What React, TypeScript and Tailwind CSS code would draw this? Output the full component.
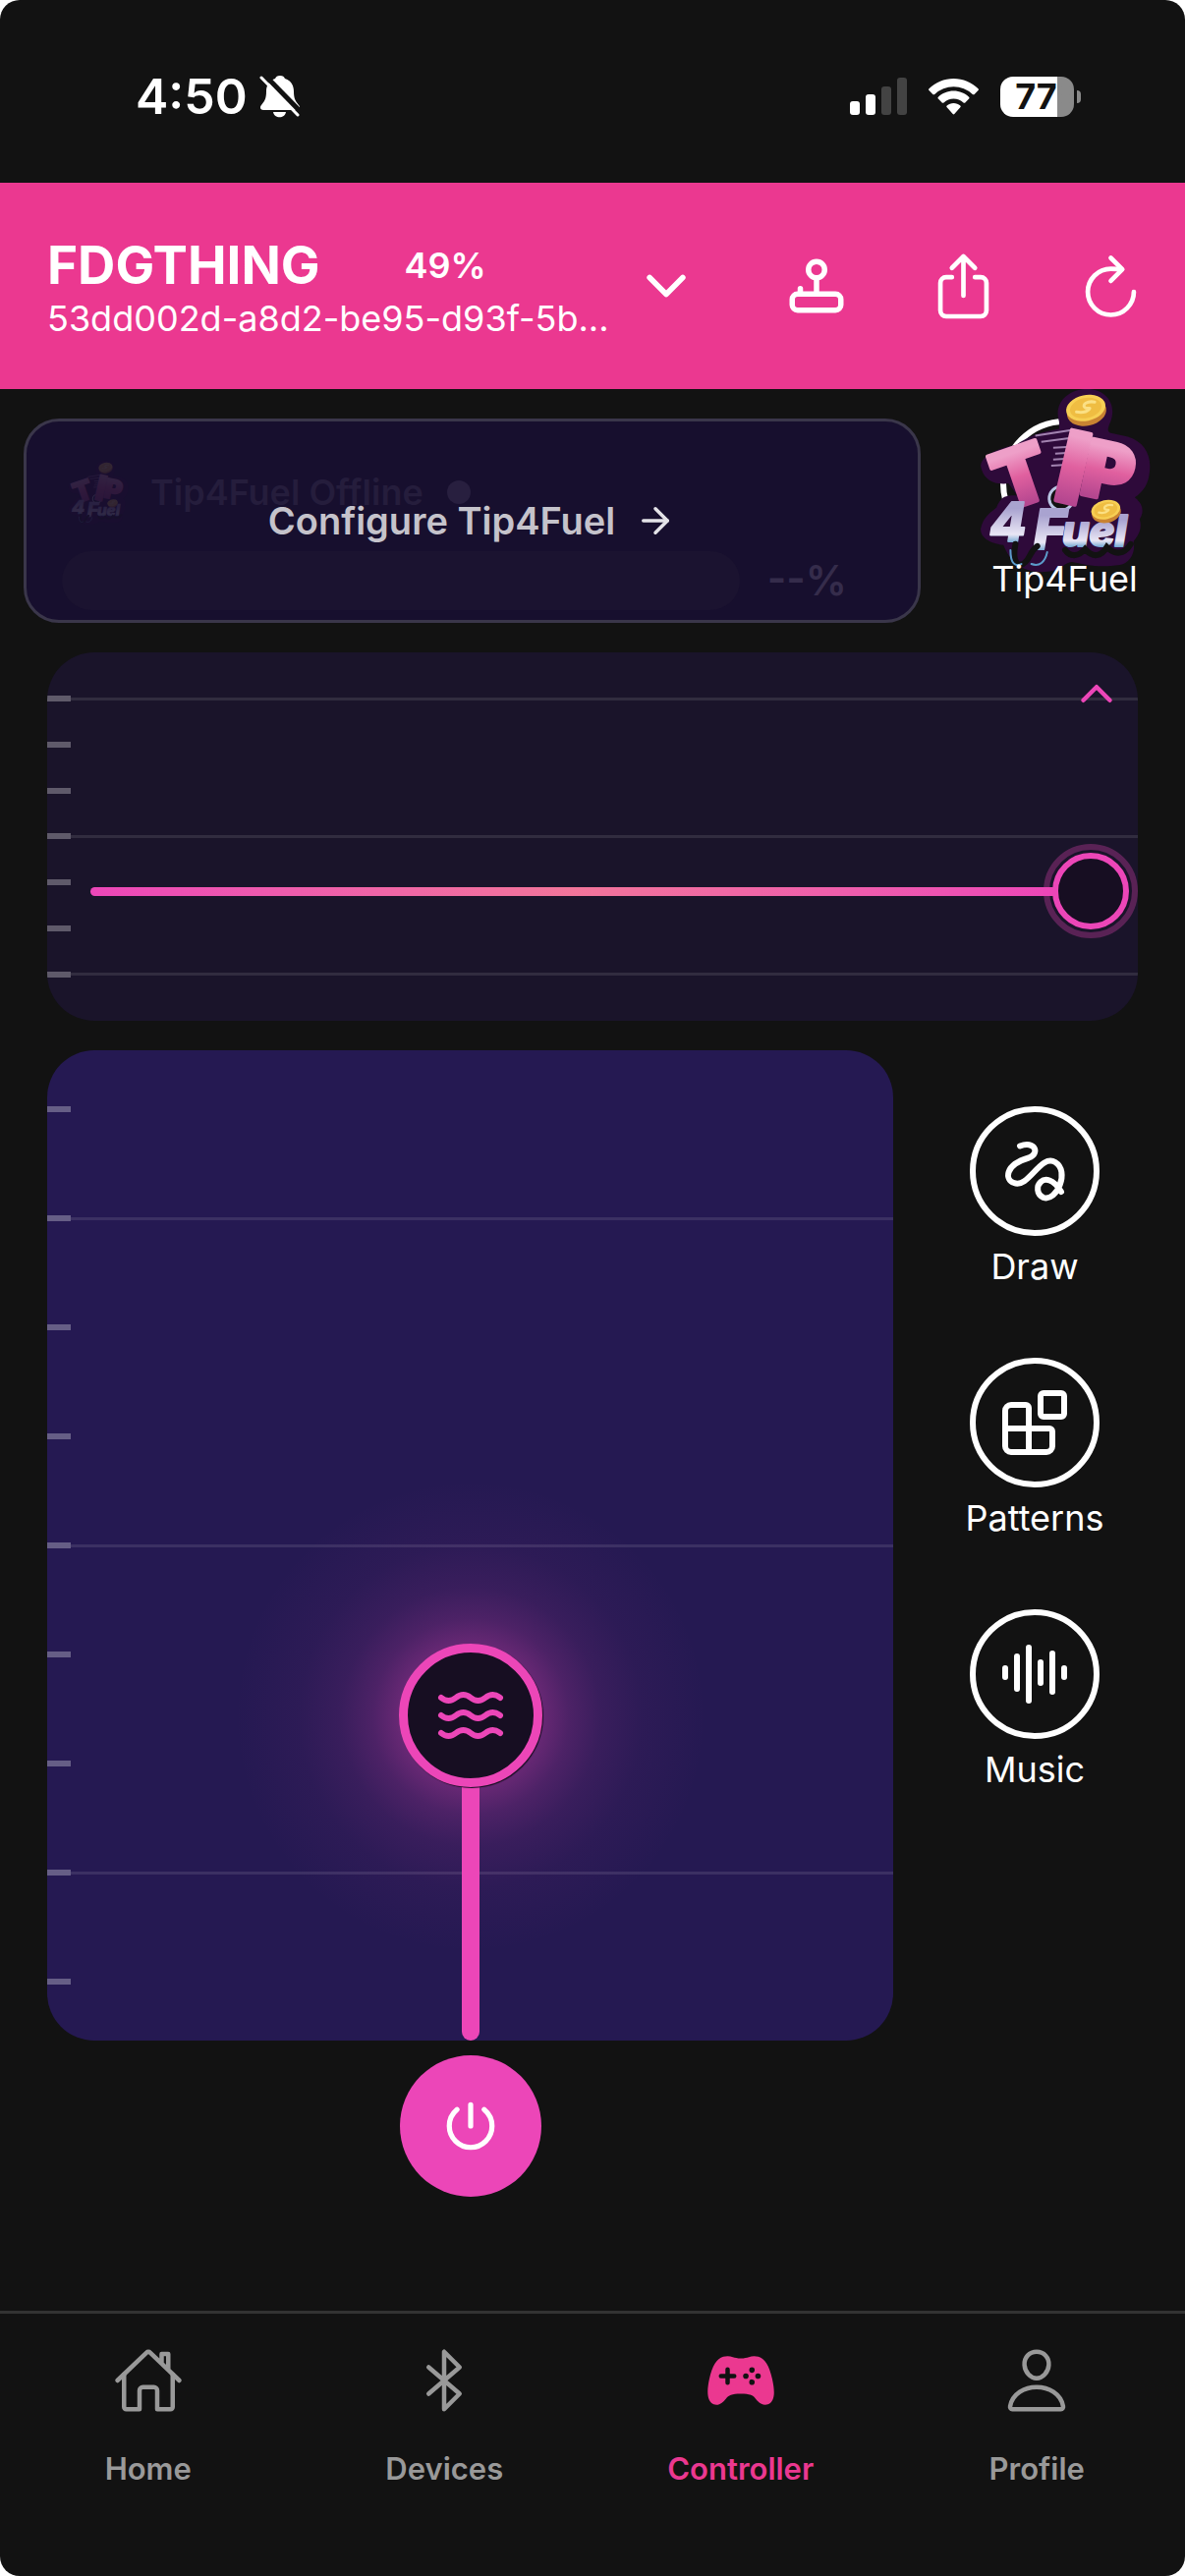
import { ArrowRight, AudioLines, Blocks, Joystick, LineSquiggle, Waves } from "lucide-react";
import {
  IoBluetoothOutline,
  IoChevronDown,
  IoChevronUp,
  IoGameController,
  IoHomeOutline,
  IoPersonOutline,
  IoPowerOutline,
  IoRefresh,
  IoShareOutline,
} from "react-icons/io5";

const speedTicks = [true, false, false, true, false, false, true];
const rangeTicks = [false, true, false, false, true, false, false, true, false];

const modes = [
  { label: "Draw", icon: LineSquiggle },
  { label: "Patterns", icon: Blocks },
  { label: "Music", icon: AudioLines },
];

const tabs = [
  { label: "Home", icon: IoHomeOutline, active: false },
  { label: "Devices", icon: IoBluetoothOutline, active: false },
  { label: "Controller", icon: IoGameController, active: true },
  { label: "Profile", icon: IoPersonOutline, active: false },
];

function Coin({ x, y, size }: { x: number; y: number; size: number }) {
  return (
    <g transform={`translate(${x} ${y}) rotate(-12) scale(${size})`}>
      <ellipse cx="0" cy="3" rx="20" ry="14" fill="#c98332" />
      <ellipse cx="0" cy="-1" rx="20" ry="13" fill="#f7cf54" />
      <ellipse cx="0" cy="-1" rx="16" ry="10" fill="#efbd42" />
      <path d="M10-5C3-8-3-5-1-2s7 1 4 3-8 2-13 0" fill="none" stroke="#fbe084" strokeWidth="3" strokeLinecap="round" />
    </g>
  );
}

function TipLogo({ id, className }: { id: string; className: string }) {
  const pink = `url(#${id}-pink)`;
  const steel = `url(#${id}-steel)`;
  return (
    <svg viewBox="0 0 172 186" className={className} aria-hidden="true">
      <defs>
        <linearGradient id={`${id}-pink`} x1="0" y1="0" x2="0" y2="1">
          <stop offset="0.25" stopColor="#ee9fc8" />
          <stop offset="0.5" stopColor="#e0609f" />
          <stop offset="0.8" stopColor="#b4468f" />
        </linearGradient>
        <linearGradient id={`${id}-steel`} x1="0" y1="0" x2="0" y2="1">
          <stop offset="0.3" stopColor="#a9a3d0" />
          <stop offset="0.7" stopColor="#e9e6f5" />
          <stop offset="0.85" stopColor="#5c9ccb" />
        </linearGradient>
      </defs>
      {/* dark sticker outline */}
      <path
        d="M80 35C74 16 89 2 108 2c19 0 30 15 24 32-3 7-4 10-1 12l18 4c17 5 24 19 22 35-1 12-6 20-15 26 8 6 10 14 5 22 3 10-2 17-6 22 2 12-4 22-14 24-21 3-34 0-48-3-10 1-10 10-31 10-20 0-32-11-38-27C9 157 1 151 1 143c2-12 10-17 16-22 5-13 12-12 21-12l-9-12C12 99 3 91 1 79c1-11 19-18 36-21 13-9 22-12 43-16z"
        fill="#2e0a3a"
      />
      <path d="M56 49l38-6M62 55l32-4M74 61l18-1M76 67l16-1M74 73l16-1M72 79l16-1" stroke="#a283b0" strokeWidth="2" />
      <circle cx="82" cy="112" r="12" fill="#121212" stroke="#b9c5e3" strokeWidth="3" />
      <g fontFamily="Inter, Roboto, sans-serif" fontWeight="900">
        <g fill={pink} stroke={pink} strokeWidth="4" strokeLinejoin="round">
          <text x="14" y="118" fontSize="80" transform="rotate(-19 42 90)">T</text>
          <text x="80" y="117" fontSize="100" transform="rotate(13 94 80)">I</text>
          <text x="104" y="113" fontSize="78" transform="rotate(12 130 85)">P</text>
        </g>
        <g fill={steel} stroke={steel} strokeWidth="2" strokeLinejoin="round" fontStyle="italic" fontWeight="800">
          <text x="10" y="155" fontSize="54">4</text>
          <text x="54" y="163" fontSize="56">F</text>
          <text x="83" y="160" fontSize="43">uel</text>
        </g>
      </g>
      <path d="M36 158c-4 20 4 24 10 18 5-4 4-10 12-16M86 164c6 8 14 6 20-1 8 9 16 8 22-2 8 8 17 8 24-3" fill="none" stroke="#121212" strokeWidth="6" strokeLinecap="round" />
      <path d="M31 164c0 14 5 17 11 14M52 178c8 3 14-2 16-12" fill="none" stroke="#5c9ccb" strokeWidth="2" strokeLinecap="round" />
      <Coin x={107} y={22} size={1} />
      <Coin x={127} y={124} size={0.74} />
    </svg>
  );
}

function StatusBar() {
  return (
    <div className="flex h-[186px] items-start justify-between pt-[70px] pr-[106px] pl-[138px] text-white">
      <div className="flex h-14 items-center gap-3">
        <span className="text-[50px] leading-none font-semibold">4:50</span>
        <svg viewBox="0 0 42 44" className="h-11 w-[42px]" fill="#fff" aria-label="Silent mode">
          <path d="M21 1c-3 0-4 1-5 3-7 2-9 8-9 13 0 8-2 10-5 14-2 2-1 5 2 5h34c3 0 4-3 2-5-3-4-5-6-5-14 0-5-2-11-9-13-1-2-2-3-5-3z" />
          <path d="M14 38h13c-1 7-12 7-13 0z" />
          <path d="M4-1l40 41" stroke="#121212" strokeWidth="5" />
          <path d="M2 3l37 38" stroke="#fff" strokeWidth="3" strokeLinecap="round" />
        </svg>
      </div>
      <div className="flex h-14 items-center gap-[22px]">
        <svg viewBox="0 0 58 38" className="h-[38px] w-[58px]" aria-label="Signal">
          <rect x="0" y="24" width="10" height="14" rx="3" fill="#fff" />
          <rect x="16" y="17" width="10" height="21" rx="3" fill="#fff" />
          <rect x="32" y="9" width="10" height="29" rx="3" fill="#434343" />
          <rect x="48" y="0" width="10" height="38" rx="3" fill="#434343" />
        </svg>
        <svg viewBox="0 0 51 37" className="h-[37px] w-[51px]" fill="#fff" aria-label="Wi-Fi">
          <path d="M25.500 0C35 0 44 4 50.500 10.200c.6.6.6 1.300 0 1.900l-3.800 3.800c-.6.6-1.300.6-1.900 0a28 28 0 0 0-38.600 0c-.6.6-1.300.6-1.900 0L.5 12.100c-.6-.6-.6-1.300 0-1.900C7 4 16 0 25.500 0z" />
          <path d="M25.500 12.500c6 0 11.500 2.300 15.600 6.200.6.6.6 1.300 0 1.900l-3.800 3.800c-.5.5-1.200.5-1.800 0a15 15 0 0 0-20 0c-.6.5-1.300.5-1.800 0l-3.800-3.800c-.6-.6-.6-1.300 0-1.900 4.100-3.900 9.600-6.200 15.600-6.200z" />
          <path d="M25.500 25c2.600 0 5 .9 6.800 2.500.6.5.6 1.200 0 1.800l-6 6.800c-.5.6-1.100.6-1.600 0l-6-6.800c-.6-.6-.6-1.300 0-1.800 1.800-1.600 4.200-2.500 6.800-2.500z" />
        </svg>
        <div className="flex items-center gap-[3px]">
          <div className="flex h-[41px] w-[75px] items-center rounded-[13px] bg-linear-to-r from-white from-77% to-[#8a8a8a] to-77%">
            <span className="w-[73px] text-center text-[36px] leading-none font-bold text-[#121212]">77</span>
          </div>
          <div className="h-[13px] w-1 rounded-r-full bg-[#8a8a8a]" />
        </div>
      </div>
    </div>
  );
}

function DeviceHeader() {
  return (
    <header className="flex h-[210px] items-center bg-[#eb3890] pr-[38px] pl-12 text-white">
      <div className="min-w-0 flex-1 pt-[6px]">
        <div className="flex items-center gap-[86px]">
          <h1 className="text-[53px] leading-[60px] font-bold">FDGTHING</h1>
          <span className="text-[36px] leading-[60px] font-semibold">49%</span>
        </div>
        <p className="text-[36px] leading-[48px]">53dd002d-a8d2-be95-d93f-5b...</p>
      </div>
      <div className="flex items-center">
        <button type="button" aria-label="Choose device" className="mr-[90px]">
          <IoChevronDown size={60} />
        </button>
        <button type="button" aria-label="Joystick" className="mr-[79px]">
          <Joystick size={66} />
        </button>
        <button type="button" aria-label="Share" className="mr-[75px]">
          <IoShareOutline size={75} />
        </button>
        <button type="button" aria-label="Refresh">
          <IoRefresh size={75} />
        </button>
      </div>
    </header>
  );
}

function TipPanel() {
  return (
    <section className="flex pt-[30px] pl-6">
      <div className="relative h-[208px] flex-1 rounded-[36px] border-[3px] border-[#3a364a] bg-[#170f2e] pt-9 pl-9">
        <div className="flex h-[72px] items-center">
          <TipLogo id="small" className="ml-1 h-[66px] w-[66px] opacity-12" />
          <span className="ml-5 text-[36px] leading-none font-semibold text-[#251d3c]">Tip4Fuel Offline</span>
          <span className="ml-6 size-6 rounded-full bg-[#281f3f]" />
        </div>
        <div className="mt-6 flex h-[60px] items-center pr-[72px]">
          <div className="h-full flex-1 rounded-[30px] bg-[#1b1330]" />
          <span className="ml-7 text-[42px] leading-none font-semibold text-[#352c4b]">--%</span>
        </div>
        <button
          type="button"
          className="absolute inset-0 flex items-center justify-center gap-5 text-[38px] font-semibold text-[#c5c3cb]"
        >
          Configure Tip4Fuel
          <ArrowRight size={42} className="text-[#e4e3e8]" />
        </button>
      </div>
      <button type="button" className="relative ml-6 flex w-[245px] flex-col items-center text-white">
        <span className="size-[132px] rounded-full border-[6px] border-white" />
        <TipLogo id="large" className="absolute -top-8 left-9 w-[174px] overflow-visible" />
        <span className="relative mt-[10px] text-[36px] leading-[42px]">Tip4Fuel</span>
      </button>
    </section>
  );
}

function Ticks({ pattern }: { pattern: boolean[] }) {
  return (
    <>
      {pattern.map((full, i) => (
        <div key={i} className="flex h-[6px] items-center">
          <div className="h-full w-6 bg-white/30" />
          {full && <div className="h-[3px] flex-1 bg-white/10" />}
        </div>
      ))}
    </>
  );
}

function SpeedPanel() {
  return (
    <section className="relative mx-12 mt-[30px] flex h-[375px] flex-col justify-between overflow-hidden rounded-[48px] bg-[#1a142a] py-11">
      <Ticks pattern={speedTicks} />
      <button type="button" aria-label="Collapse" className="absolute top-[18px] right-[18px] text-[#ec46b8]">
        <IoChevronUp size={48} />
      </button>
      <div className="absolute inset-x-0 top-[195px] flex h-24 items-center pl-11">
        <div className="-mr-[10px] h-[9px] flex-1 rounded-l-full bg-linear-to-r from-[#ec46b8] via-[#f2759a] to-[#ec46b8]" />
        <div className="relative size-24 rounded-full border-[6px] border-[#ec46b8]/30 p-[3px]">
          <div className="size-full rounded-full border-[6px] border-[#ec46b8] bg-[#170e22]" />
        </div>
      </div>
    </section>
  );
}

function IntensityPanel() {
  return (
    <div className="flex min-w-0 flex-1 flex-col items-center">
      <div className="relative flex h-[1008px] w-full flex-col justify-between overflow-hidden rounded-[48px] bg-[#251952] py-[57px]">
        <Ticks pattern={rangeTicks} />
        <div className="absolute inset-x-0 bottom-0 flex h-[640px] flex-col items-center">
          <div className="absolute top-0 size-[620px] rounded-full bg-[radial-gradient(circle,#ec46b859_70px,#ec46b833_100px,#ec46b81a_132px,#ec46b80a_175px,#ec46b800_240px)]" />
          <div className="relative mt-[236px] flex size-[146px] shrink-0 items-center justify-center rounded-full border-[9px] border-[#ec46b8] bg-[#170e22] text-[#ec46b8] shadow-[1px_1px_1px_#170e22]">
            <Waves size={72} />
          </div>
          <div className="w-[18px] flex-1 rounded-b-full bg-[#ec46b8]" />
        </div>
      </div>
      <button
        type="button"
        aria-label="Power"
        className="mt-[15px] flex size-36 items-center justify-center rounded-full bg-[#ec46b8] text-white"
      >
        <IoPowerOutline size={58} className="[&_path]:stroke-[46px]" />
      </button>
    </div>
  );
}

function ModeList() {
  return (
    <div className="flex w-[297px] flex-col items-center gap-[72px] pt-[57px] pr-[9px]">
      {modes.map(({ label, icon: Icon }) => (
        <button key={label} type="button" className="flex flex-col items-center gap-[10px] text-white">
          <span className="flex size-[132px] items-center justify-center rounded-full border-[6px] border-white">
            <Icon size={72} />
          </span>
          <span className="text-[36px] leading-[42px]">{label}</span>
        </button>
      ))}
    </div>
  );
}

function TabBar() {
  return (
    <nav className="flex h-[270px] border-t-[3px] border-[#333] pt-8">
      {tabs.map(({ label, icon: Icon, active }) => (
        <a
          key={label}
          href="#"
          className={`flex flex-1 flex-col items-center gap-9 ${active ? "text-[#eb3890]" : "text-[#999]"}`}
        >
          <Icon size={72} />
          <span className="text-[31px] leading-9 font-semibold">{label}</span>
        </a>
      ))}
    </nav>
  );
}

export default function App() {
  return (
    <div className="min-h-screen bg-white font-[Inter,Roboto,sans-serif]">
      <div className="flex min-h-screen flex-col overflow-hidden rounded-[20px] bg-[#121212]">
        <StatusBar />
        <DeviceHeader />
        <TipPanel />
        <SpeedPanel />
        <main className="flex flex-1 pt-[30px] pl-12">
          <IntensityPanel />
          <ModeList />
        </main>
        <TabBar />
      </div>
    </div>
  );
}
